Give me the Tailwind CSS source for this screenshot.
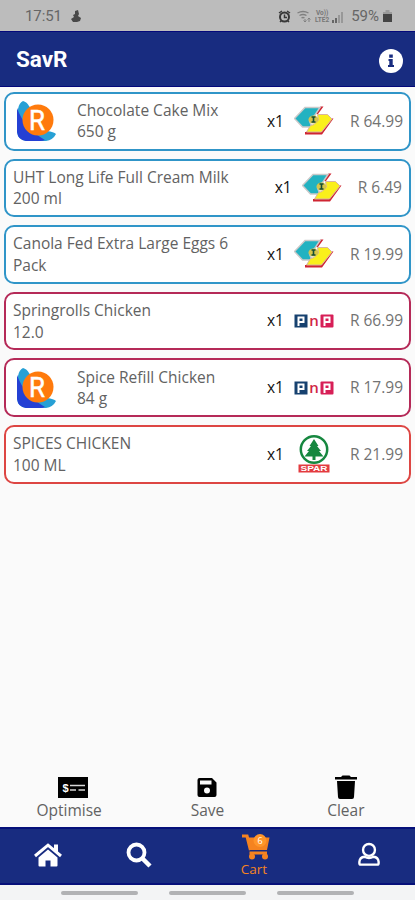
<!DOCTYPE html>
<html lang="en">
<head>
<meta charset="utf-8">
<title>SavR</title>
<script src="https://cdn.jsdelivr.net/npm/@tailwindcss/browser@4"></script>
</head>
<body class="w-[415px] h-[900px] overflow-hidden bg-[#fafafa] font-['Open_Sans','Noto_Sans',sans-serif] text-[#626262] flex flex-col">
<svg class="hidden">
  <symbol id="savr" viewBox="0 0 40 42">
    <path d="M2 9 Q3 3 7 1 Q11 2 13 6 L31 31 Q38 32 40 34 Q37 40 30 41 H10 Q2 40 1 32Z" fill="#27a0d5"/>
    <path d="M1 8 Q8 28 29 40 Q27 41 24 41 H10 Q2 40 1 32Z" fill="#2440d4"/>
    <circle cx="22" cy="20" r="15.500" fill="#ff7a0c"/>
    <text x="21" y="29.500" text-anchor="middle" textLength="16" lengthAdjust="spacingAndGlyphs" font-family="Roboto" font-weight="400" font-size="28" fill="#fff" stroke="#fff" stroke-width=".5">R</text>
  </symbol>
  <symbol id="checkers" viewBox="0 0 40 30">
    <path d="M26.500 .5H29.500L24 8H20ZM37 12.500H39.500L28 28.500H11V26H27Z" fill="#cf2532"/>
    <path d="M11 1.500H26L21 9 15.500 15 18 21H8.500L.5 12.500Z" fill="#22b2c1" stroke="#c9c9c9" stroke-width="1.500"/>
    <path d="M23.500 8.500H33.500L38 13 27.500 26H12.500L16.500 19.500 20 18.500 24.500 14Z" fill="#faf01b" stroke="#d8b5a0" stroke-width="1"/>
    <ellipse cx="19.500" cy="13.500" rx="5" ry="4" fill="#d7c54a"/>
    <path d="M17.500 11H21.500M17.500 16H21.500M19.500 11V16" stroke="#164d35" stroke-width="1.600"/>
  </symbol>
  <symbol id="pnp" viewBox="0 0 40 14">
    <rect x=".5" y=".5" width="13" height="13" fill="#16416f"/>
    <rect x="26.500" y=".5" width="13" height="13" rx="1" fill="#d71f57"/>
    <path d="M4.500 12V3.500H9.500V8H5M30.500 12V3.500H35.500V8H31" fill="none" stroke="#fff" stroke-width="2"/>
    <text x="20" y="12" text-anchor="middle" font-family="Open Sans" font-weight="600" font-size="15" fill="#d02545">n</text>
  </symbol>
  <symbol id="spar" viewBox="0 0 40 38">
    <circle cx="20" cy="14.500" r="13.200" fill="#fff" stroke="#16873f" stroke-width="2.500"/>
    <path d="M20 4 24.500 11H23L27 16H25L29.500 21.500H21.500V25H18.500V21.500H10.500L15 16H13L17 11H15.500Z" fill="#16873f"/>
    <rect x="4.500" y="29.500" width="31" height="8" fill="#e33b3f"/>
    <text x="20" y="36.300" text-anchor="middle" textLength="27" lengthAdjust="spacingAndGlyphs" font-family="Liberation Sans" font-weight="700" font-size="7.500" fill="#fff">SPAR</text>
  </symbol>
</svg>

<header class="shrink-0">
  <div class="h-[31px] bg-[#bcbcbc] flex items-center pl-[25px] pr-[23px] pt-[2px] text-[#666] font-[Roboto,sans-serif]">
    <span class="text-[15px] tracking-[-0.1px]">17:51</span>
    <svg class="ml-[9px] w-[10px] h-[13px]" viewBox="0 0 10 13" fill="#484848"><path d="M4 1 7 0 8 4 7 6 10 8 9 11 6 12H2L0 9 3 7 2 5 4 4Z"/></svg>
    <svg class="ml-auto w-[13px] h-[13px]" viewBox="0 0 13 13" fill="none" stroke="#393939"><circle cx="6.500" cy="7" r="4.500" stroke-width="2"/><path d="M1 3 4 1M9 1 12 3M2 12 3.500 10.500M11 12 9.500 10.500M6.500 4.500V7.500H9" stroke-width="1.500"/></svg>
    <svg class="ml-[6px] w-[14px] h-[13px]" viewBox="0 0 14 13" fill="none" stroke="#808080"><path d="M0.500 3Q6 0 11.500 3M2.500 5.500Q6 3.500 9.500 5.500M4.500 8Q6 7 7.500 8" stroke-width="1.300"/><path d="M8 9V12M6.500 10.500 8 12 9.500 10.500M12 12V8M10.500 9.500 12 8 13.500 9.500" stroke-width="1"/></svg>
    <span class="ml-[3px] w-[16px] text-[6.500px] leading-[6.500px] font-bold text-center text-[#777]">Vo))<br>LTE2</span>
    <svg class="ml-[2px] w-[11px] h-[12px]" viewBox="0 0 11 12"><path d="M0 9h2v3H0zM3 7h2v5H3z" fill="#666"/><path d="M6 4h2v8H6zM9 1h2v11H9z" fill="#989898"/></svg>
    <span class="ml-[8px] text-[15px]">59%</span>
    <svg class="ml-[4px] w-[9px] h-[13px]" viewBox="0 0 9 13"><path d="M2.500 0h4v2H9v3H0V2h2.500z" fill="#9b9b9b"/><path d="M0 4h9v8H0z" fill="#444"/></svg>
  </div>
  <div class="h-[56px] bg-[#182c80] border-y border-y-[#04087a] flex items-center justify-between pl-[16px] pr-[12px]">
    <h1 class="font-[Roboto,sans-serif] font-bold text-[22.500px] leading-none text-white">SavR</h1>
    <svg class="w-[24px] h-[24px] mt-[4px]" viewBox="0 0 24 24"><circle cx="12" cy="12" r="12" fill="#fff"/><path d="M10.200 5.500h3.600v3.200h-3.600zM9.500 10h4.200v6H15v2H9v-2h1.300v-4H9.500z" fill="#182c80"/></svg>
  </div>
</header>

<main class="flex-1 pt-[5px] px-[4px] flex flex-col gap-[8px] text-[15.500px] leading-[21.500px]">
  <article class="h-[58.600px] shrink-0 rounded-[10px] border-2 border-[#3095c8] bg-white flex items-center pl-[10px] pr-[6px]">
    <svg class="w-[40px] h-[42px]"><use href="#savr"/></svg>
    <div class="ml-[21px]">Chocolate Cake Mix<br>650 g</div>
    <span class="ml-auto text-[#111]">x1</span><svg class="ml-[10px] mr-[16px] w-[40px] h-[30px]"><use href="#checkers"/></svg><span class="text-[#737373]">R 64.99</span>
  </article>
  <article class="h-[58.600px] shrink-0 rounded-[10px] border-2 border-[#3095c8] bg-white flex items-center pl-[7px] pr-[7px]">
    <div class="pt-px">UHT Long Life Full Cream Milk<br>200 ml</div>
    <span class="ml-auto text-[#111]">x1</span><svg class="ml-[10px] mr-[16px] w-[40px] h-[30px]"><use href="#checkers"/></svg><span class="text-[#737373]">R 6.49</span>
  </article>
  <article class="h-[58.600px] shrink-0 rounded-[10px] border-2 border-[#3095c8] bg-white flex items-center pl-[7px] pr-[6px]">
    <div class="pt-px">Canola Fed Extra Large Eggs 6<br>Pack</div>
    <span class="ml-auto text-[#111]">x1</span><svg class="ml-[10px] mr-[16px] w-[40px] h-[30px]"><use href="#checkers"/></svg><span class="text-[#737373]">R 19.99</span>
  </article>
  <article class="h-[58.600px] shrink-0 rounded-[10px] border-2 border-[#b52a58] bg-white flex items-center pl-[7px] pr-[6px]">
    <div class="pt-px">Springrolls Chicken<br>12.0</div>
    <span class="ml-auto text-[#111]">x1</span><svg class="ml-[10px] mr-[16px] w-[40px] h-[14px]"><use href="#pnp"/></svg><span class="text-[#737373]">R 66.99</span>
  </article>
  <article class="h-[58.600px] shrink-0 rounded-[10px] border-2 border-[#b52a58] bg-white flex items-center pl-[10px] pr-[6px]">
    <svg class="w-[40px] h-[42px]"><use href="#savr"/></svg>
    <div class="ml-[21px] pt-px">Spice Refill Chicken<br>84 g</div>
    <span class="ml-auto text-[#111]">x1</span><svg class="ml-[10px] mr-[16px] w-[40px] h-[14px]"><use href="#pnp"/></svg><span class="text-[#737373]">R 17.99</span>
  </article>
  <article class="h-[58.600px] shrink-0 rounded-[10px] border-2 border-[#dd4643] bg-white flex items-center pl-[7px] pr-[6px]">
    <div class="pt-px">SPICES CHICKEN<br>100 ML</div>
    <span class="ml-auto text-[#111]">x1</span><svg class="ml-[10px] mr-[16px] w-[40px] h-[38px]"><use href="#spar"/></svg><span class="text-[#737373]">R 21.99</span>
  </article>
</main>

<section class="h-[52px] shrink-0 grid grid-cols-3 text-[15.500px] leading-[20px] text-center">
  <div class="flex flex-col items-center"><svg class="w-[30px] h-[25px] ml-[7px]" viewBox="0 0 30 25"><path d="M0 2h30v21H0z" fill="#000"/><path d="M12 10.500H27M12 15H18M20.500 15H27" stroke="#d8d8d8" stroke-width="1.600"/><text x="7.500" y="16.500" text-anchor="middle" font-family="Liberation Sans" font-size="11" font-weight="700" fill="#fff">$</text></svg>Optimise</div>
  <div class="flex flex-col items-center"><svg class="w-[20px] h-[25px]" viewBox="0 0 20 25"><path fill-rule="evenodd" d="M2.500 3H15L19.500 7.500V20Q19.500 22 17.500 22H2.500Q.5 22 .5 20V5Q.5 3 2.500 3ZM3 5.500V9.500H14.500V5.500ZM10 12.500A3 3 0 1 0 10 18.500A3 3 0 1 0 10 12.500Z"/></svg>Save</div>
  <div class="flex flex-col items-center"><svg class="w-[22px] h-[25px]" viewBox="0 0 22 25"><path d="M0 2H6L7.500 .5H14.500L16 2H22V4.500H0ZM2 6H20L19 22Q19 24 17 24H5Q3 24 3 22Z"/></svg>Clear</div>
</section>

<nav class="h-[58px] shrink-0 bg-[#182c80] border-y-2 border-y-[#06107a] flex text-[#f58320]">
  <div class="w-[96px] flex items-center justify-center"><svg class="w-[28px] h-[24px] -mt-[3px]" viewBox="0 0 28 24"><path d="M14 6.500 23.500 14.500V22.500Q23.500 23.500 22.500 23.500H16.500V17.500H11.500V23.500H5.500Q4.500 23.500 4.500 22.500V14.500Z" fill="#fff"/><path d="M1 13 14 2.200 27 13" fill="none" stroke="#fff" stroke-width="3"/><path d="M20 1.500h4v8l-4-3.500z" fill="#fff"/></svg></div>
  <div class="w-[85px] flex items-center justify-center"><svg class="w-[26px] h-[26px] -mt-[3px]" viewBox="0 0 26 26" fill="none" stroke="#fff"><circle cx="10.500" cy="10.500" r="8" stroke-width="3.800"/><path d="M16.500 16.500 24 24" stroke-width="4.500"/></svg></div>
  <div class="w-[146px] flex flex-col items-center pt-[4px] text-[13.500px] leading-[16px]"><svg class="w-[29px] h-[27px] ml-[3px]" viewBox="0 0 29 27"><path d="M1 3H6L9.500 17" fill="none" stroke="#f58320" stroke-width="3.200"/><path d="M6 4.500H28.500L26 17H9ZM8.500 18.500H26V21.500H8.500Z" fill="#f58320"/><circle cx="11" cy="23.500" r="3" fill="#f58320"/><circle cx="24" cy="23.500" r="3" fill="#f58320"/><circle cx="19" cy="7.500" r="6.500" fill="#ff9529"/><text x="19" y="11" text-anchor="middle" font-family="Open Sans" font-size="9" fill="#fff">6</text></svg><span class="mt-[1px]">Cart</span></div>
  <div class="flex-1 flex items-center justify-center pr-[4px]"><svg class="w-[22px] h-[25px] -mt-[3px]" viewBox="0 0 24 26" fill="none" stroke="#fff" stroke-width="2.600"><circle cx="12" cy="8" r="6.500"/><path d="M7 15.500Q12 18 17 15.500Q22 16 22.500 21V22.500Q22.500 24 21 24H3Q1.500 24 1.500 22.500V21Q2 16 7 15.500Z"/></svg></div>
</nav>
<footer class="h-[15px] shrink-0 bg-[#f3f4f5] flex justify-center gap-[31px] pt-[6px]">
  <i class="w-[77px] h-[4px] rounded-full bg-[#b1b2b4]"></i><i class="w-[77px] h-[4px] rounded-full bg-[#b1b2b4]"></i><i class="w-[77px] h-[4px] rounded-full bg-[#b1b2b4]"></i>
</footer>
</body>
</html>
